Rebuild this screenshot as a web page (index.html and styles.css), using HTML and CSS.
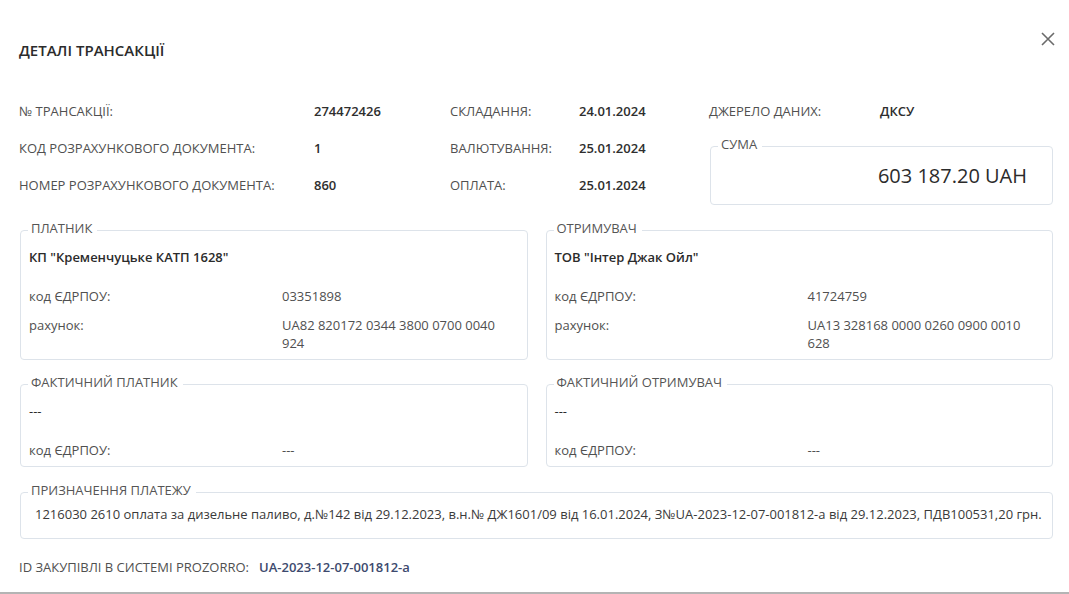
FILE: index.html
```html
<!DOCTYPE html>
<html lang="uk">

<head>
    <meta charset="UTF-8">
    <meta name="viewport" content="width=device-width, initial-scale=1.0">
    <title>Деталі трансакції</title>
    <link rel="stylesheet" href="styles.css">
</head>

<body>
    <div class="modal">
        <div class="modal-head">
            <h2 class="modal-title">ДЕТАЛІ ТРАНСАКЦІЇ</h2>
            <span class="modal-close">
                <svg width="16" height="16" viewBox="0 0 16 16">
                    <path d="M2 2L14 14M14 2L2 14" stroke="#6b6b6b" stroke-width="1.6" fill="none" />
                </svg>
            </span>
        </div>

        <!-- загальна інформація -->
        <div class="info">
            <span class="info-label">№ ТРАНСАКЦІЇ:</span>
            <span class="info-value">274472426</span>
            <span class="info-label">СКЛАДАННЯ:</span>
            <span class="info-value">24.01.2024</span>
            <span class="info-label">ДЖЕРЕЛО ДАНИХ:</span>
            <span class="info-value">ДКСУ</span>

            <span class="info-label">КОД РОЗРАХУНКОВОГО ДОКУМЕНТА:</span>
            <span class="info-value">1</span>
            <span class="info-label">ВАЛЮТУВАННЯ:</span>
            <span class="info-value">25.01.2024</span>
            <fieldset class="box box-sum">
                <legend>СУМА</legend>
                <div class="sum">603 187.20 UAH</div>
            </fieldset>

            <span class="info-label">НОМЕР РОЗРАХУНКОВОГО ДОКУМЕНТА:</span>
            <span class="info-value">860</span>
            <span class="info-label">ОПЛАТА:</span>
            <span class="info-value">25.01.2024</span>
        </div>

        <!-- сторони -->
        <div class="parties">
            <fieldset class="box">
                <legend>ПЛАТНИК</legend>
                <div class="party-name">КП "Кременчуцьке КАТП 1628"</div>
                <div class="party-row">
                    <span>код ЄДРПОУ:</span>
                    <span>03351898</span>
                </div>
                <div class="party-row">
                    <span>рахунок:</span>
                    <span>UA82 820172 0344 3800 0700 0040 924</span>
                </div>
            </fieldset>
            <fieldset class="box">
                <legend>ОТРИМУВАЧ</legend>
                <div class="party-name">ТОВ "Інтер Джак Ойл"</div>
                <div class="party-row">
                    <span>код ЄДРПОУ:</span>
                    <span>41724759</span>
                </div>
                <div class="party-row">
                    <span>рахунок:</span>
                    <span>UA13 328168 0000 0260 0900 0010 628</span>
                </div>
            </fieldset>
            <fieldset class="box">
                <legend>ФАКТИЧНИЙ ПЛАТНИК</legend>
                <div class="party-name party-empty">---</div>
                <div class="party-row">
                    <span>код ЄДРПОУ:</span>
                    <span>---</span>
                </div>
            </fieldset>
            <fieldset class="box">
                <legend>ФАКТИЧНИЙ ОТРИМУВАЧ</legend>
                <div class="party-name party-empty">---</div>
                <div class="party-row">
                    <span>код ЄДРПОУ:</span>
                    <span>---</span>
                </div>
            </fieldset>
        </div>

        <fieldset class="box box-purpose">
            <legend>ПРИЗНАЧЕННЯ ПЛАТЕЖУ</legend>
            <div class="purpose">1216030 2610 оплата за дизельне паливо, д.№142 від 29.12.2023, в.н.№ ДЖ1601/09 від 16.01.2024, З№UA-2023-12-07-001812-а від 29.12.2023, ПДВ100531,20 грн.</div>
        </fieldset>

        <div class="prozorro">
            <span class="prozorro-label">ID ЗАКУПІВЛІ В СИСТЕМІ PROZORRO:</span>
            <a class="prozorro-link">UA-2023-12-07-001812-a</a>
        </div>
    </div>
</body>

</html>
```

FILE: styles.css
```css
* {
    margin: 0;
    padding: 0;
    box-sizing: border-box;
}

body,
html {
    width: 100%;
    height: 100%;
    background-color: #fff;
}

body {
    font-family: "Open Sans", "Noto Sans", sans-serif;
    font-size: 13px;
    line-height: 18px;
    color: #333;
}

.modal {
    height: 594px;
    padding: 38px 16px 0 19px;
    border-bottom: 2px solid #b4b4b4;
    overflow: hidden;
}

.modal-head {
    display: flex;
    justify-content: space-between;
    align-items: flex-start;
    height: 24px;
}

.modal .modal-title {
    font-size: 15px;
    font-weight: 600;
    line-height: 24px;
    color: #2b2b2b;
}

.modal .modal-close {
    display: block;
    width: 16px;
    height: 16px;
    margin: -7px -3px 0 0;
    cursor: pointer;
}

/* верхня таблиця */
.info {
    display: grid;
    grid-template-columns: 295px 136px 129px 130px 171px 1fr;
    grid-auto-rows: 37px;
    align-items: center;
    margin-top: 30px;
}

.info .info-label {
    color: #505050;
}

.info .info-value {
    font-weight: 600;
    color: #2e2e2e;
}

/* рамки з легендою */
.box {
    border: 1px solid #dde3ea;
    border-radius: 4px;
    padding: 0 8px;
    min-width: 0;
}

.box legend {
    padding: 0 5px 4px 3px;
    margin-left: -1px;
    color: #555;
    line-height: 18px;
}

.info .box-sum {
    grid-column: 5 / 7;
    grid-row: 2 / 4;
    align-self: start;
    margin: 6px 0 0 1px;
    padding: 0 25px 0 8px;
}

.box-sum .sum {
    text-align: right;
    font-size: 20px;
    line-height: 27px;
    padding: 5px 0 15px;
    color: #2b2b2b;
}

.parties {
    display: grid;
    grid-template-columns: 1fr 1fr;
    column-gap: 18px;
    row-gap: 13px;
    margin: 16px 0 0 1px;
}

.parties .box {
    padding: 7px 8px 7px;
}

.parties .party-name {
    font-weight: 600;
    color: #2b2b2b;
    margin-bottom: 21px;
}

.parties .party-empty {
    font-weight: 400;
}

.parties .party-row {
    display: grid;
    grid-template-columns: 253px 1fr;
    color: #505050;
}

.parties .party-row+.party-row {
    margin-top: 11px;
}

.box-purpose {
    margin: 14px 0 0 1px;
    padding: 2px 8px 15px;
}

.box-purpose .purpose {
    margin-left: 6px;
    color: #3a3a3a;
    white-space: nowrap;
}

.prozorro {
    display: flex;
    gap: 10px;
    margin-top: 19px;
}

.prozorro .prozorro-label {
    color: #505050;
}

.prozorro .prozorro-link {
    color: #3d4a6e;
    font-weight: 600;
    cursor: pointer;
}
```
